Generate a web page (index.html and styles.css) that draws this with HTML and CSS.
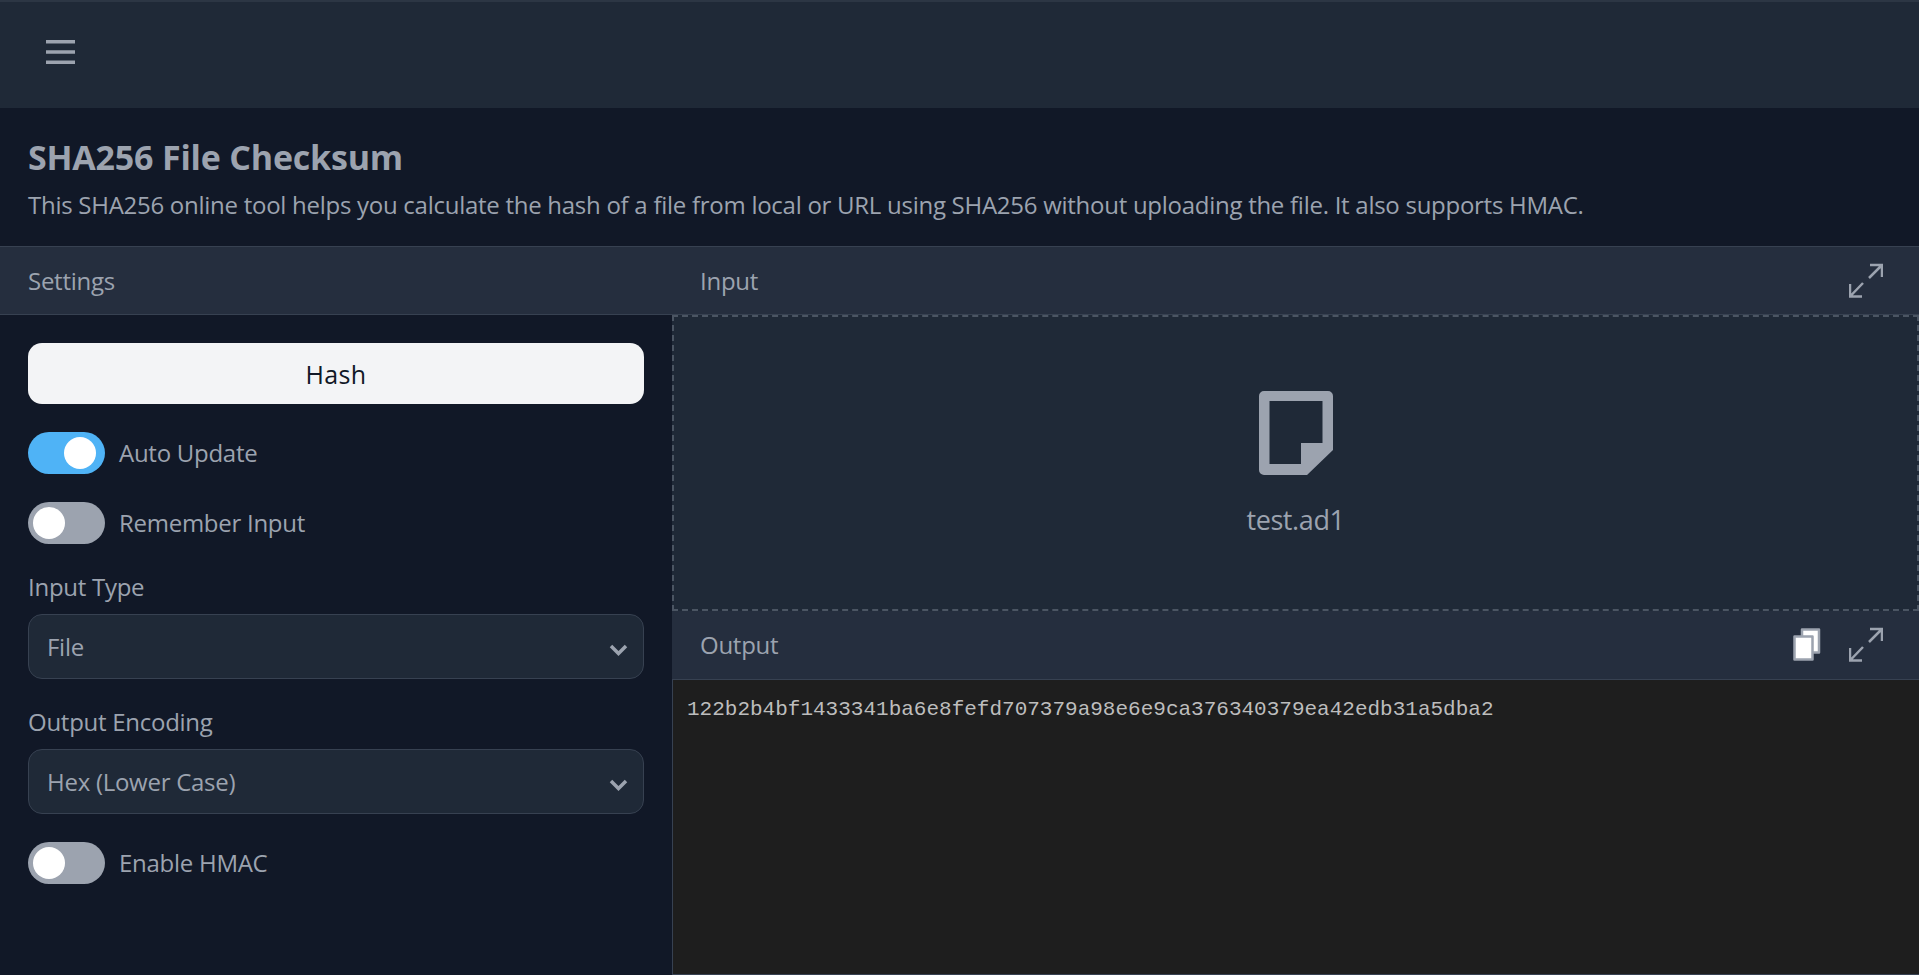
FILE: index.html
```html
<!DOCTYPE html>
<html lang="en">
<head>
<meta charset="utf-8">
<title>SHA256 File Checksum</title>
<link rel="stylesheet" href="styles.css">
</head>
<body>
<header class="topbar">
  <svg class="menu-icon" viewBox="0 0 28 24" preserveAspectRatio="none" aria-hidden="true"><path d="M0 0h28v3.6H0zM0 10.2h28v3.6H0zM0 20.4h28V24H0z"/></svg>
</header>
<section class="intro">
  <h1 class="title">SHA256 File Checksum</h1>
  <p class="desc">This SHA256 online tool helps you calculate the hash of a file from local or URL using SHA256 without uploading the file. It also supports HMAC.</p>
</section>
<main class="tool">
  <aside class="settings">
    <div class="bar"><span class="bar-label">Settings</span></div>
    <div class="settings-body">
      <button class="hash-btn">Hash</button>
      <div class="switch-row"><span class="switch on"></span><span class="switch-label">Auto Update</span></div>
      <div class="switch-row"><span class="switch"></span><span class="switch-label">Remember Input</span></div>
      <div class="field-label">Input Type</div>
      <div class="select"><span>File</span>
        <svg class="chevron" viewBox="0 0 19 12" aria-hidden="true"><path d="M2 2l7.5 7.5L17 2"/></svg>
      </div>
      <div class="field-label">Output Encoding</div>
      <div class="select"><span>Hex (Lower Case)</span>
        <svg class="chevron" viewBox="0 0 19 12" aria-hidden="true"><path d="M2 2l7.5 7.5L17 2"/></svg>
      </div>
      <div class="switch-row"><span class="switch"></span><span class="switch-label">Enable HMAC</span></div>
    </div>
  </aside>
  <section class="panes">
    <div class="bar bar-right"><span class="bar-label">Input</span>
      <svg class="act-icon" viewBox="0 0 34 35" aria-hidden="true"><path d="M21 2h12v12M33 2L20 15M1 21v12.500h12M1 33.500L14 20"/></svg>
    </div>
    <div class="dropzone">
      <svg class="file-icon" viewBox="0 0 74 84" aria-hidden="true"><path fill-rule="evenodd" d="M5 0h64a5 5 0 0 1 5 5v54L48 84H5a5 5 0 0 1-5-5V5a5 5 0 0 1 5-5zM10.500 10v63H42V52h21.500V10z"/></svg>
      <div class="file-name">test.ad1</div>
    </div>
    <div class="bar bar-right bar-output"><span class="bar-label">Output</span>
      <div class="actions">
        <svg class="copy-icon" viewBox="0 0 28 33" aria-hidden="true"><path class="sheet" d="M9 1.500h17v23H9z"/><path class="sheet" d="M1.500 8.500h18v23h-18z"/></svg>
        <svg class="act-icon" viewBox="0 0 34 35" aria-hidden="true"><path d="M21 2h12v12M33 2L20 15M1 21v12.500h12M1 33.500L14 20"/></svg>
      </div>
    </div>
    <pre class="output">122b2b4bf1433341ba6e8fefd707379a98e6e9ca376340379ea42edb31a5dba2</pre>
  </section>
</main>
</body>
</html>
```

FILE: styles.css
```css
* { box-sizing: border-box; }
html, body { margin: 0; height: 100%; }
body {
  height: 975px;
  overflow: hidden;
  display: flex;
  flex-direction: column;
  background: #111827;
  color: #9ca3af;
  font-family: "Open Sans", "Noto Sans", sans-serif;
  font-size: 24px;
  letter-spacing: -0.27px;
}
.topbar {
  height: 108px;
  flex: none;
  display: flex;
  align-items: center;
  padding: 0 0 6px 46px;
  background: #1f2937;
  border-top: 2px solid #2c3644;
}
.menu-icon { width: 29px; height: 24px; fill: #9ca3af; }
.intro { height: 138px; flex: none; padding-top: 27px; }
.title {
  margin: 0;
  padding-left: 28px;
  font-size: 34px;
  line-height: 44px;
  font-weight: 700;
  letter-spacing: -0.2px;
}
.desc {
  margin: 10px 0 0;
  padding-left: 28px;
  line-height: 32px;
  white-space: nowrap;
}
.tool { flex: 1; display: grid; grid-template-columns: 672px 1fr; min-height: 0; }
.bar {
  height: 69px;
  display: flex;
  align-items: center;
  padding: 0 28px;
  background: #252e3e;
  border-top: 1px solid #374151;
  border-bottom: 1px solid #374151;
}
.bar-right { justify-content: space-between; padding-right: 36px; }
.settings-body { padding: 28px 28px 0; }
.hash-btn {
  display: block;
  width: 616px;
  height: 61px;
  border: 0;
  border-radius: 14px;
  background: #f3f4f6;
  color: #111827;
  font: inherit;
  font-size: 25px;
  letter-spacing: 0.3px;
}
.switch-row { display: flex; align-items: center; gap: 14px; margin-top: 28px; }
.switch {
  position: relative;
  display: block;
  width: 77px;
  height: 42px;
  border-radius: 21px;
  background: #9ca3af;
}
.switch::after {
  content: "";
  position: absolute;
  left: 5px;
  top: 5px;
  width: 32px;
  height: 32px;
  border-radius: 50%;
  background: #fff;
}
.switch.on { background: #4fb3f6; }
.switch.on::after { left: 36px; }
.switch-label { line-height: 42px; }
.field-label { margin-top: 27px; line-height: 32px; }
.select {
  position: relative;
  height: 65px;
  margin-top: 11px;
  display: flex;
  align-items: center;
  padding-left: 18px;
  width: 616px;
  background: #1f2937;
  border: 1px solid #374151;
  border-radius: 14px;
}
.chevron {
  position: absolute;
  right: 15px;
  top: 29px;
  width: 19px;
  height: 12px;
  fill: none;
  stroke: #9ca3af;
  stroke-width: 3.500;
}
.panes { display: flex; flex-direction: column; min-height: 0; }
.act-icon { width: 34px; height: 35px; fill: none; stroke: #9ca3af; stroke-width: 2.500; }
.actions { display: flex; align-items: center; gap: 28px; }
.copy-icon { width: 28px; height: 33px; }
.sheet { fill: #fff; stroke: #9ca3af; stroke-width: 2.500; stroke-linejoin: round; }
.dropzone {
  height: 296px;
  flex: none;
  display: flex;
  flex-direction: column;
  align-items: center;
  background: #1f2937;
  border: 2px dashed #4b5563;
  padding-top: 74px;
}
.file-icon { width: 74px; height: 84px; fill: #9ca3af; }
.file-name { margin-top: 27px; font-size: 27px; line-height: 36px; letter-spacing: -0.4px; }
.bar-output { border-top: 0; padding-bottom: 2px; }
.output {
  flex: 1;
  margin: 0;
  padding: 16px 14px;
  background: #1e1e1e;
  border-left: 1px solid #374151;
  border-bottom: 1px solid #374151;
  color: #bdbdbd;
  font-family: "Liberation Mono", monospace;
  font-size: 21px;
  line-height: 28px;
  letter-spacing: 0;
}
```
